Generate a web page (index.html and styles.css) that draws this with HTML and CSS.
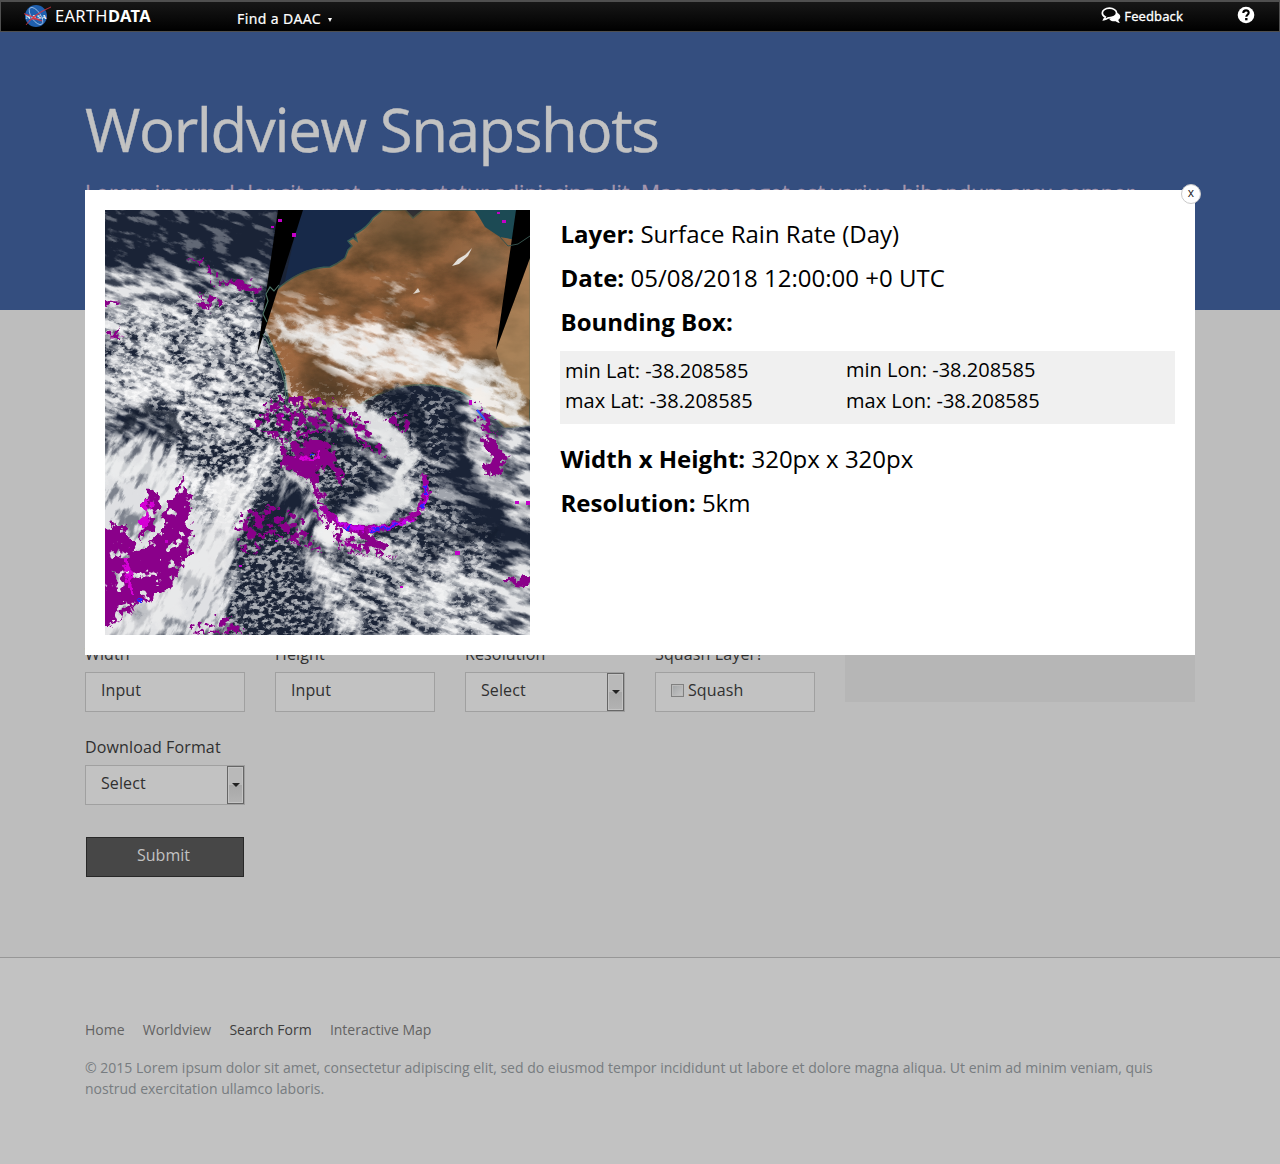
FILE: index.html
```html
<!DOCTYPE html>
<html lang="en">
<head>
<meta charset="utf-8">
<title>Worldview Snapshots</title>
<link rel="stylesheet" href="styles.css">
</head>
<body>
<header class="topbar">
  <a class="brand">
    <svg class="brand-logo" width="30" height="24" viewBox="0 0 30 24">
      <circle cx="13" cy="13" r="11" fill="#1f5fae"/>
      <ellipse cx="13" cy="13" rx="10" ry="4.5" fill="none" stroke="#b9d2f0" stroke-width=".7" transform="rotate(55 13 13)"/>
      <text x="2.5" y="15.5" class="logo-text" textLength="21">NASA</text>
      <path d="M3 22Q10 11 28 4Q15 10 11 14.5Q14 15 19 18Q12 16 9 16Q6 18 3 22ZM1 10.5L11 14L3 12Z" fill="#d8343f" stroke="#d8343f" stroke-width=".5"/>
    </svg>
    <span class="brand-name">EARTH<b>DATA</b></span>
  </a>
  <span class="daac">Find a DAAC <i class="caret"></i></span>
  <span class="feedback">
    <svg width="20" height="17" viewBox="0 0 20 17">
      <path d="M14.5 5.5C17.5 6 19.3 7.7 19.3 9.6C19.3 11 18.5 12.2 17.2 13L18.8 16C16.8 15.8 15.6 15 14.7 14.2C12 14.5 9.8 13.8 8.4 12.4" fill="#fff"/>
      <path d="M8.4 1.2C4.4 1.2 1.3 3.3 1.3 6C1.3 7.7 2.5 9.2 4.3 10L2.9 12.6C5.1 12.2 6.3 11.5 7.2 10.8C12 11 15.6 8.9 15.6 6C15.6 3.3 12.4 1.2 8.4 1.2Z" fill="#080808" stroke="#fff" stroke-width="1.7"/>
    </svg>
    Feedback
  </span>
  <svg class="help" width="18" height="18" viewBox="0 0 18 18">
    <circle cx="9" cy="9" r="8.3" fill="#fff"/>
    <path d="M6.3 7C6.4 3.5 11.7 3.5 11.7 6.7C11.7 8.7 9.3 8.8 9.3 10.8" fill="none" stroke="#000" stroke-width="2.1"/>
    <rect x="8.1" y="12" width="2.4" height="2.3" fill="#000"/>
  </svg>
</header>

<section class="hero">
  <h1>Worldview Snapshots</h1>
  <p>Lorem ipsum dolor sit amet, consectetur adipiscing elit. Maecenas eget est varius, bibendum arcu semper</p>
</section>

<main class="content">
  <form class="form">
    <div class="field"><label>Width</label><div class="control">Input</div></div>
    <div class="field"><label>Height</label><div class="control">Input</div></div>
    <div class="field"><label>Resolution</label><div class="control">Select<span class="drop"></span></div></div>
    <div class="field"><label>Squash Layer?</label><div class="control"><span class="check"></span>Squash</div></div>
    <div class="field"><label>Download Format</label><div class="control">Select<span class="drop"></span></div></div>
    <div class="submit">Submit</div>
  </form>
  <aside class="side"></aside>
</main>

<footer class="footer">
  <nav><a>Home</a><a>Worldview</a><a class="current">Search Form</a><a>Interactive Map</a></nav>
  <p>© 2015 Lorem ipsum dolor sit amet, consectetur adipiscing elit, sed do eiusmod tempor incididunt ut labore et dolore magna aliqua. Ut enim ad minim veniam, quis<br>nostrud exercitation ullamco laboris.</p>
</footer>

<div class="modal">
  <svg class="satellite" width="425" height="425" viewBox="0 0 425 425" color-interpolation-filters="sRGB">
    <defs>
      <filter id="cloud" filterUnits="userSpaceOnUse" x="-200" y="-200" width="850" height="850">
        <feTurbulence type="fractalNoise" baseFrequency=".04 .12" numOctaves="7" seed="4"/>
        <feColorMatrix values="0 0 0 0 1 0 0 0 0 1 0 0 0 0 1 3 0 0 0 -1" result="n"/>
        <feGaussianBlur in="SourceGraphic" stdDeviation="7" result="d"/>
        <feComposite in="n" in2="d" operator="arithmetic" k1="0" k2="1" k3="1.6" k4="-1"/>
      </filter>
      <filter id="cells" filterUnits="userSpaceOnUse" x="-200" y="-200" width="850" height="850">
        <feTurbulence type="fractalNoise" baseFrequency=".15 .22" numOctaves="4" seed="9"/>
        <feColorMatrix values="0 0 0 0 1 0 0 0 0 1 0 0 0 0 1 4 0 0 0 -1.5" result="n"/>
        <feGaussianBlur in="SourceGraphic" stdDeviation="8" result="d"/>
        <feComposite in="n" in2="d" operator="arithmetic" k1="0" k2="1" k3="1.6" k4="-1"/>
      </filter>
      <filter id="wisps" filterUnits="userSpaceOnUse" x="-50" y="-50" width="525" height="525">
        <feTurbulence type="fractalNoise" baseFrequency=".05" numOctaves="5" seed="12" result="w"/>
        <feGaussianBlur in="SourceGraphic" stdDeviation="2.5"/>
        <feDisplacementMap in2="w" scale="34" xChannelSelector="R" yChannelSelector="G"/>
      </filter>
      <filter id="rain" filterUnits="userSpaceOnUse" x="-50" y="-50" width="525" height="525">
        <feTurbulence type="fractalNoise" baseFrequency=".1" numOctaves="4" seed="6" result="w"/>
        <feColorMatrix in="w" values="0 0 0 0 0 0 0 0 0 0 0 0 0 0 0 0 16 0 0 -5" result="holes"/>
        <feDisplacementMap in="SourceGraphic" in2="w" scale="20" xChannelSelector="R" yChannelSelector="G"/>
        <feComposite in2="holes" operator="in"/>
      </filter>
      <filter id="band" filterUnits="userSpaceOnUse" x="-50" y="-50" width="525" height="525">
        <feTurbulence type="fractalNoise" baseFrequency=".15" numOctaves="3" seed="3" result="w"/>
        <feDisplacementMap in="SourceGraphic" in2="w" scale="9" xChannelSelector="R" yChannelSelector="G"/>
      </filter>
      <filter id="speckle" filterUnits="userSpaceOnUse" x="-50" y="-50" width="525" height="525">
        <feTurbulence type="fractalNoise" baseFrequency=".14" numOctaves="3" seed="16" result="w"/>
        <feColorMatrix in="w" values="0 0 0 0 0 0 0 0 0 0 0 0 0 0 0 0 16 0 0 -7.8" result="holes"/>
        <feDisplacementMap in="SourceGraphic" in2="w" scale="20" xChannelSelector="R" yChannelSelector="G"/>
        <feComposite in2="holes" operator="in"/>
      </filter>
      <filter id="soil" x="0" y="0" width="1" height="1">
        <feTurbulence type="fractalNoise" baseFrequency=".025 .04" numOctaves="6" seed="8"/>
        <feColorMatrix values="0 0 0 0 .33 0 0 0 0 .24 0 0 0 0 .14 1.9 0 0 0 -.65" result="n"/>
        <feComposite in="n" in2="SourceGraphic" operator="in" result="m"/>
        <feMerge><feMergeNode in="SourceGraphic"/><feMergeNode in="m"/></feMerge>
      </filter>
      <filter id="soft" x="-.5" y="-.5" width="2" height="2"><feGaussianBlur stdDeviation="14"/></filter>
      <linearGradient id="land" x1="0" y1="0" x2=".75" y2="1">
        <stop offset="0" stop-color="#8f7654"/><stop offset=".35" stop-color="#9a6740"/>
        <stop offset=".65" stop-color="#a96e45"/><stop offset="1" stop-color="#9b7b55"/>
      </linearGradient>
      <clipPath id="frame"><rect width="425" height="425"/></clipPath>
      <clipPath id="coast"><path d="M176 76Q200 57 225 57Q245 46 243 36Q258 22 278 0H425V215H184Z"/></clipPath>
    </defs>
    <g clip-path="url(#frame)">
      <rect width="425" height="425" fill="#1a2336"/>
      <path d="M195 0H285L240 50L178 80Z" fill="#172949"/>
      <path d="M176 76Q200 57 225 57L231 54L240 48L243 40L247 36L243 31L248 28L252 31L250 24Q262 18 268 8L278 0H300L308 8L318 0H370L385 18L405 28L425 34V215L400 218Q375 192 355 182Q330 172 300 176Q268 184 255 195Q230 202 184 194L180 165L158 115Q158 90 176 76Z" fill="url(#land)" stroke="#39615a" stroke-width="1.5" filter="url(#soil)"/>
      <g clip-path="url(#coast)">
        <g filter="url(#soft)">
          <ellipse cx="305" cy="22" rx="48" ry="20" fill="#5c4a30" opacity=".7"/>
          <ellipse cx="225" cy="180" rx="42" ry="17" fill="#4d3a25" opacity=".8"/>
          <ellipse cx="360" cy="80" rx="30" ry="20" fill="#6a4528" opacity=".6"/>
          <ellipse cx="385" cy="50" rx="30" ry="14" fill="#877254" opacity=".8"/>
        </g>
        <path d="M391 140L425 48V190L400 170Z" fill="#ad885e" opacity=".65"/>
      </g>
      <path d="M370 0H412V30L395 27L380 17Z" fill="#1c4a54"/>

      <g filter="url(#cloud)" transform="rotate(20 200 200)" fill="#fff" opacity=".88">
        <g transform="rotate(-20 200 200)">
          <path d="M-60 -20H175L165 40L60 55L-60 45Z" opacity=".22"/>
          <path d="M-60 45L60 55L168 50L155 120L175 200L130 235L-60 230Z" opacity=".58"/>
          <path d="M-60 70L70 60L80 110L-60 120ZM-60 165L90 150L120 185L-60 210Z" opacity=".35"/>
          <path d="M160 120L215 108L300 110L365 145L410 175L425 225L375 195L330 172L265 178L230 165L205 142Z" opacity=".76"/>
          <path d="M170 80L230 85L220 108L165 112ZM270 60L300 58L330 90L280 95Z" opacity=".36"/>
          <path d="M350 170L400 185L440 230V330L395 305L360 240Z" opacity=".7"/>
          <path d="M180 195L240 195L285 230L292 275L280 310L245 335L200 330L235 300L265 275L255 240L220 215Z" opacity=".65"/>
          <path d="M210 325L320 340L440 330V440H250L200 390Z" opacity=".58"/>
          <path d="M300 370L440 350V440H320Z" opacity=".25"/>
          <path d="M300 230L350 220L380 330H290Z" opacity=".42"/>
        </g>
      </g>
      <g filter="url(#cloud)" transform="rotate(118 200 250)" fill="#fff" opacity=".86">
        <g transform="rotate(-118 200 250)">
          <path d="M-30 225H55L110 270L185 215L170 255L130 330L120 430H-30Z" opacity=".85"/>
          <path d="M90 300L125 260L135 300L125 430H40Z" opacity=".6"/>
          <path d="M-30 245H50L90 290L75 430H-30Z" opacity=".6"/>
          <path d="M165 250L200 270L230 330L260 440H235L200 370Z" opacity=".55"/>
        </g>
      </g>
      <g filter="url(#cells)" fill="#fff" opacity=".82">
        <path d="M0 100L150 80L180 170L220 195L180 260L130 330L70 290L60 200H0Z" opacity=".56"/>
        <path d="M130 330L190 320L220 430H110Z" opacity=".48"/>
        <path d="M205 225L265 235L270 275L220 300L200 270Z" opacity=".48"/>
        <path d="M205 180L350 185L330 280L390 330V430H220L210 340L290 320L290 220Z" opacity=".42"/>
      </g>

      <g filter="url(#wisps)" fill="none" stroke="#eeefef" stroke-linecap="round">
        <path d="M175 122Q235 125 285 137T380 175" stroke-width="13" opacity=".8"/>
        <path d="M230 142Q280 165 350 160T405 205" stroke-width="13" opacity=".75"/>
        <path d="M250 202Q307 225 297 275Q283 318 220 320" stroke-width="19" opacity=".92"/>
        <path d="M180 260Q215 275 217 305T310 340" stroke-width="10" opacity=".85"/>
        <path d="M365 220Q375 270 435 310" stroke-width="15" opacity=".6"/>
        <path d="M15 425Q105 380 125 285" stroke-width="30" opacity=".6"/>
        <path d="M10 260Q55 245 65 290T30 360" stroke-width="26" opacity=".7"/>
        <path d="M190 320Q215 370 250 425M225 340Q270 360 330 350" stroke-width="5" opacity=".6"/>
        <path d="M310 405Q335 370 380 375Q415 377 430 395" stroke-width="11" opacity=".5"/>
      </g>
      <path d="M347 56L353 49L360 45L367 38L363 46L354 54Z" fill="#e4e0da"/>
      <path d="M308 84L313 78L315 82Z" fill="#ddd5cc"/>
      <g filter="url(#wisps)" fill="none" stroke="#131b2c" stroke-linecap="round">
        <path d="M10 226Q35 195 55 205Q75 220 78 248" stroke-width="11" opacity=".8"/>
        <path d="M285 185Q315 200 320 240" stroke-width="18" opacity=".7"/>
        <path d="M350 210L365 235M330 330L390 325" stroke-width="13" opacity=".6"/>
        <path d="M190 315Q215 350 240 350" stroke-width="5" opacity=".6"/>
        <path d="M215 235Q245 225 262 255Q260 280 225 285" stroke-width="10" opacity=".5"/>
      </g>

      <g filter="url(#rain)" fill="#8a008a">
        <path d="M78 265L86 300L84 345L60 383L30 397L0 418H-10V320L20 315L30 345L56 320L65 295Z"/>
        <path d="M40 283L55 280L50 320L36 330Z"/>
        <path d="M175 240Q200 222 225 237Q240 252 237 275L224 260L212 258L220 300L200 265L175 257Z"/>
        <path d="M205 235Q230 230 236 270L224 258L205 262Z"/>
        <path d="M374 215L390 230L400 250L397 266L378 262L385 245Z"/>
        <path d="M400 370L428 363V378L400 375ZM115 70L150 73L156 85L125 76ZM86 50L100 52L97 57ZM0 90L14 92L0 97Z"/>
      </g>
      <g filter="url(#speckle)" fill="#8a008a">
        <path d="M165 192L225 195L260 210L280 250L260 240L235 215L190 225L160 215ZM280 210L305 205L300 225Z"/>
        <path d="M130 308L165 295L195 310L215 345L165 325L145 350L135 335Z"/>
        <path d="M165 190L230 190L250 215L180 235L150 220ZM205 290L235 320L290 350L240 345Z"/>
        <path d="M95 83L118 92L108 105L93 98ZM100 58L120 68L110 80ZM2 128L20 112L15 133ZM85 415L125 408L145 425H90ZM370 190L380 200L395 230L375 220Z"/>
      </g>
      <g filter="url(#band)" fill="none" stroke="#9a009c" stroke-width="6">
        <path d="M319 265L322 280Q320 304 292 314Q260 325 240 316Q226 310 218 296"/>
        <path d="M255 320L266 332L281 338" stroke="#8a008a" stroke-width="7"/>
        <path d="M208 300L218 312M240 332L256 340" stroke-width="3"/>
      </g>
      <g filter="url(#rain)" fill="none" stroke="#d500d5" stroke-width="5">
        <path d="M20 342L25 385M43 287L39 318M192 248H215"/>
      </g>
      <g filter="url(#band)" fill="none">
        <path d="M321 274L322 288L317 300M307 310L283 317L266 320M258 320L242 317L229 308" stroke="#c400e8" stroke-width="3"/>
        <path d="M321 275V284M320 294L316 300M293 314L277 319L266 321M247 318H239M35 388V393M204 244H210" stroke="#2b20ff" stroke-width="2.2"/>
      </g>
      <path d="M372 200L378 207L380 210" fill="none" stroke="#2f5dff" stroke-width="2"/>

      <path d="M173 0H198L152 145Z"/>
      <path d="M411 0H425V48L391 140Z"/>
      <g fill="#c300c8">
        <path d="M173 9h4v3h-4zM187 23h4v4h-4zM166 16h3v2h-3zM145 90h3v2h-3zM176 205h3v2h-3zM60 330h3v3h-3zM134 355h3v2h-3zM397 10h4v3h-4zM392 2h3v2h-3zM364 190h3v5h-3zM410 291h4v3h-4zM421 291h4v4h-4zM350 341h5v4h-5zM295 376h3v2h-3zM170 330h3v2h-3z"/>
      </g>
      <path d="M162 112L158 104L163 91L161 84L165 77L169 81L174 75M158 124L166 137L176 160L180 174L181 195" fill="none" stroke="#4d7466" stroke-width="1.1"/>
      <path d="M395 27L403 36L413 34L425 26" fill="none" stroke="#36534d"/>
    </g>
  </svg>
  <div class="details">
    <p><b>Layer:</b> Surface Rain Rate (Day)</p>
    <p><b>Date:</b> 05/08/2018 12:00:00 +0 UTC</p>
    <p><b>Bounding Box:</b></p>
    <div class="bounds">
      <div><span>min Lat: -38.208585</span><span>max Lat: -38.208585</span></div>
      <div class="lon"><span>min Lon: -38.208585</span><span>max Lon: -38.208585</span></div>
    </div>
    <p><b>Width x Height:</b> 320px x 320px</p>
    <p><b>Resolution:</b> 5km</p>
  </div>
  <button class="close">x</button>
</div>
</body>
</html>
```
FILE: styles.css
```css
* { box-sizing: border-box; }
body { margin: 0; width: 1280px; min-height: 1164px; position: relative; background: #bdbdbd; color: #303030; font-family: "Open Sans", "Noto Sans", sans-serif; font-size: 16px; }
p, h1 { margin: 0; }

.topbar { display: flex; height: 32px; padding: 0 24px 0 23px; color: #fff; background: linear-gradient(#171717, #000); border: 1px solid #4f4f4f; border-top-width: 2px; font-family: "Noto Sans", sans-serif; }
.brand { display: flex; width: 213px; height: 28px; }
.brand-logo { margin: 1px 0 0 -1px; }
.logo-text { font: bold 7px "Liberation Serif", serif; fill: #fff; }
.brand-name { margin-left: 2px; font-size: 16.5px; line-height: 28px; letter-spacing: .3px; }
.daac { display: flex; align-items: center; height: 33px; font-size: 14px; letter-spacing: .4px; white-space: nowrap; -webkit-text-stroke: .2px #fff; }
.caret { margin: 3px 0 0 7px; border: 2.5px solid transparent; border-top: 4px solid #fff; border-bottom: 0; }
.feedback { display: flex; align-items: center; gap: 3px; height: 27px; margin-left: auto; font-size: 13px; letter-spacing: .1px; -webkit-text-stroke: .3px #fff; }
.help { margin: 4px 0 0 54px; }

.hero { height: 278px; padding: 56px 85px 0; background: #344e7f; color: #c2c2c2; }
.hero h1 { height: 90px; font-size: 60px; font-weight: 400; line-height: 82px; white-space: nowrap; letter-spacing: -1.4px; -webkit-text-stroke: .4px #c2c2c2; }
.hero p { font-size: 21px; line-height: 30px; white-space: nowrap; letter-spacing: .16px; color: #a596ad; -webkit-text-stroke: .3px #a596ad; }

.content { display: flex; height: 647px; padding: 335px 85px 0; }
.form { display: grid; grid-template-columns: repeat(4, 160px); grid-template-rows: 93px 99px 40px; column-gap: 30px; width: 730px; }
.field label { display: block; height: 27px; line-height: 18px; letter-spacing: .13px; white-space: nowrap; }
.control { display: flex; align-items: center; height: 40px; padding: 0 0 4px 15px; position: relative; background: #c2c2c2; border: 1px solid #a0a0a0; letter-spacing: .1px; }
.drop { position: absolute; right: 0; top: 0; width: 17px; height: 38px; background: linear-gradient(#b9b9b9 50%, #a8a8a8 50%, #b3b3b3); border: 1px solid #666; box-shadow: inset 0 0 0 1px #c4c4c4; }
.drop::after { content: ""; position: absolute; left: 4px; top: 16px; border: 4px solid transparent; border-top-color: #222; border-bottom: 0; }
.check { width: 13px; height: 13px; margin-right: 4px; background: linear-gradient(135deg, #a2a5a7, #c5c5c5); border: 1px solid #808080; box-shadow: inset 0 0 0 1px #bbb; }
.submit { grid-row: 3; width: 158px; height: 40px; margin-left: 1px; padding-right: 3px; background: #474747; border: 1px solid #282828; color: #c2c2c2; line-height: 34px; text-align: center; }
.side { width: 380px; height: 57px; margin-left: 30px; background: #b6b6b6; }

.footer { height: 207px; padding: 61px 85px 0; background: #c2c2c2; border-top: 1px solid #979797; color: #777c80; font-size: 14px; }
.footer nav { display: flex; gap: 18.2px; height: 38px; line-height: 22px; color: #626262; }
.footer .current { color: #3d3d3d; }
.footer p { line-height: 21px; white-space: nowrap; }

.modal { display: flex; gap: 30px; position: absolute; left: 85px; top: 190px; width: 1110px; height: 465px; padding: 20px; background: #fff; color: #000; }
.satellite { flex: none; display: block; }
.details { flex: 1; padding-top: 2px; font-size: 24px; font-weight: 400; line-height: 44px; white-space: nowrap; }
.details p { padding-left: .5px; }
.details b { font-weight: 700; }
.bounds { display: flex; height: 73px; margin: 7px 0 13px; padding: 5px; background: #f0f0f0; font-size: 20px; line-height: 30px; }
.bounds div { display: grid; align-content: start; width: 281px; }
.lon { margin-top: -1px; row-gap: 1px; }
.close { position: absolute; right: -6px; top: -6px; width: 20px; height: 20px; padding: 0 0 2px; border: 1px solid #c9c9c9; border-radius: 50%; background: #fff; color: #222; font: 12px/16px "Open Sans", sans-serif; }
```
